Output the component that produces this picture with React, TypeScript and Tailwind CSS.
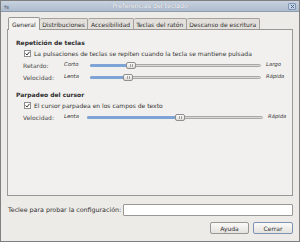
import React from "react";

const font = { fontFamily: '"DejaVu Sans", sans-serif' };

function Check() {
  return (
    <span className="w-[7px] h-[7px] border border-[#8f8f8f] bg-white flex items-center justify-center shrink-0">
      <svg width="5" height="5" viewBox="0 0 5 5">
        <path d="M0.5 2.5 L2 4 L4.5 0.8" fill="none" stroke="#333" strokeWidth="1" />
      </svg>
    </span>
  );
}

function Slider({ pos, width }: { pos: number; width: number }) {
  return (
    <div className="relative h-[7px] flex items-center" style={{ width }}>
      <div className="w-full h-[3px] rounded-[2px] border border-[#a8a8a8] bg-[#d9d7d3]" />
      <div
        className="absolute left-0 h-[3px] rounded-[2px] bg-[#7ea4d6]"
        style={{ width: pos }}
      />
      <div
        className="absolute top-0 h-[7px] w-[10px] rounded-[2px] border border-[#8e8e8e] bg-gradient-to-b from-[#fbfbfa] to-[#dedbd7] flex items-center justify-center gap-[1px]"
        style={{ left: pos - 1 }}
      >
        <span className="w-px h-[3px] bg-[#a0a0a0]" />
        <span className="w-px h-[3px] bg-[#a0a0a0]" />
      </div>
    </div>
  );
}

function Row({
  label,
  min,
  max,
  pos,
}: {
  label: string;
  min: string;
  max: string;
  pos: number;
}) {
  return (
    <div className="flex items-center h-[12px] pl-[15px]">
      <span className="w-[41px] text-[#4a4a4a]">{label}</span>
      <span className="w-[26px] italic text-[5.3px] text-[#333]">{min}</span>
      <Slider pos={pos} width={171} />
      <span className="ml-[5px] italic text-[5.3px] text-[#333]">{max}</span>
    </div>
  );
}

export default function App() {
  const tabs = ["Distribuciones", "Accesibilidad", "Teclas del ratón", "Descanso de escritura"];
  return (
    <div
      className="w-[300px] h-[242px] flex flex-col bg-[#edebe8] border border-[#7f7f7f] text-[6px] text-[#2e2e2e] overflow-hidden"
      style={font}
    >
      <div className="h-[11px] shrink-0 relative flex items-center justify-center bg-gradient-to-b from-[#c8d2df] to-[#aebccd] border-b border-[#8d9bb0]">
        <span className="absolute left-[3px] text-[6px] text-[#5d6b80]">⇆</span>
        <span className="text-white text-[6.3px] [text-shadow:0_0_1px_#6b7a90]">
          Preferencias del teclado
        </span>
        <span className="absolute right-[3px] top-[2px] w-[8px] h-[7px] rounded-[1px] border border-[#7f95b3] bg-[#c9d6e8] flex items-center justify-center">
          <svg width="5" height="5" viewBox="0 0 5 5">
            <path d="M0.8 0.8 L4.2 4.2 M4.2 0.8 L0.8 4.2" stroke="#4e6384" strokeWidth="1" />
          </svg>
        </span>
      </div>

      <div className="flex-1 flex flex-col px-[6px] pt-[4px]">
        <div className="flex items-end h-[13px] pl-[1px]">
          <div className="h-[13px] px-[3px] flex items-center bg-[#f3f2f0] border border-b-0 border-[#9a9894] rounded-t-[2px] relative top-px z-10">
            General
          </div>
          {tabs.map((t) => (
            <div
              key={t}
              className="h-[11px] px-[2.5px] flex items-center bg-[#e3e0dc] border border-b-0 border-l-0 border-[#a5a29d] rounded-t-[2px]"
            >
              {t}
            </div>
          ))}
        </div>

        <div className="h-[167px] bg-[#f1f0ee] border border-[#9a9894] pt-[7px] flex flex-col">
          <div className="pl-[8px] font-bold h-[10px] flex items-center">Repetición de teclas</div>
          <div className="flex items-center gap-[3px] pl-[16px] h-[12px] text-[#333]">
            <Check />
            <span>La pulsaciones de teclas se repiten cuando la tecla se mantiene pulsada</span>
          </div>
          <Row label="Retardo:" min="Corto" max="Largo" pos={37} />
          <Row label="Velocidad:" min="Lenta" max="Rápida" pos={34} />
          <div className="pl-[8px] font-bold h-[10px] mt-[6px] flex items-center">Parpadeo del cursor</div>
          <div className="flex items-center gap-[3px] pl-[16px] h-[12px] text-[#333]">
            <Check />
            <span>El cursor parpadea en los campos de texto</span>
          </div>
          <div className="flex items-center h-[12px] pl-[15px]">
            <span className="w-[41px] text-[#4a4a4a]">Velocidad:</span>
            <span className="w-[23px] italic text-[5.3px] text-[#333]">Lenta</span>
            <Slider pos={89} width={176} />
            <span className="ml-[5px] italic text-[5.3px] text-[#333]">Rápida</span>
          </div>
        </div>

        <div className="flex items-center mt-[8px] h-[12px]">
          <span className="w-[116px] pl-px text-[6.3px]">Teclee para probar la configuración:</span>
          <div className="flex-1 h-[12px] bg-white border border-[#9a9894] rounded-[1px]" />
        </div>

        <div className="flex justify-end gap-[4px] mt-[6px]">
          <div className="w-[39px] h-[12px] flex items-center justify-center border border-[#9a9894] rounded-[2px] bg-gradient-to-b from-[#fafaf9] to-[#e4e2de]">
            Ayuda
          </div>
          <div className="w-[40px] h-[12px] flex items-center justify-center border border-[#7d93b4] rounded-[2px] bg-gradient-to-b from-[#fafaf9] to-[#e4e2de]">
            Cerrar
          </div>
        </div>
      </div>
    </div>
  );
}
